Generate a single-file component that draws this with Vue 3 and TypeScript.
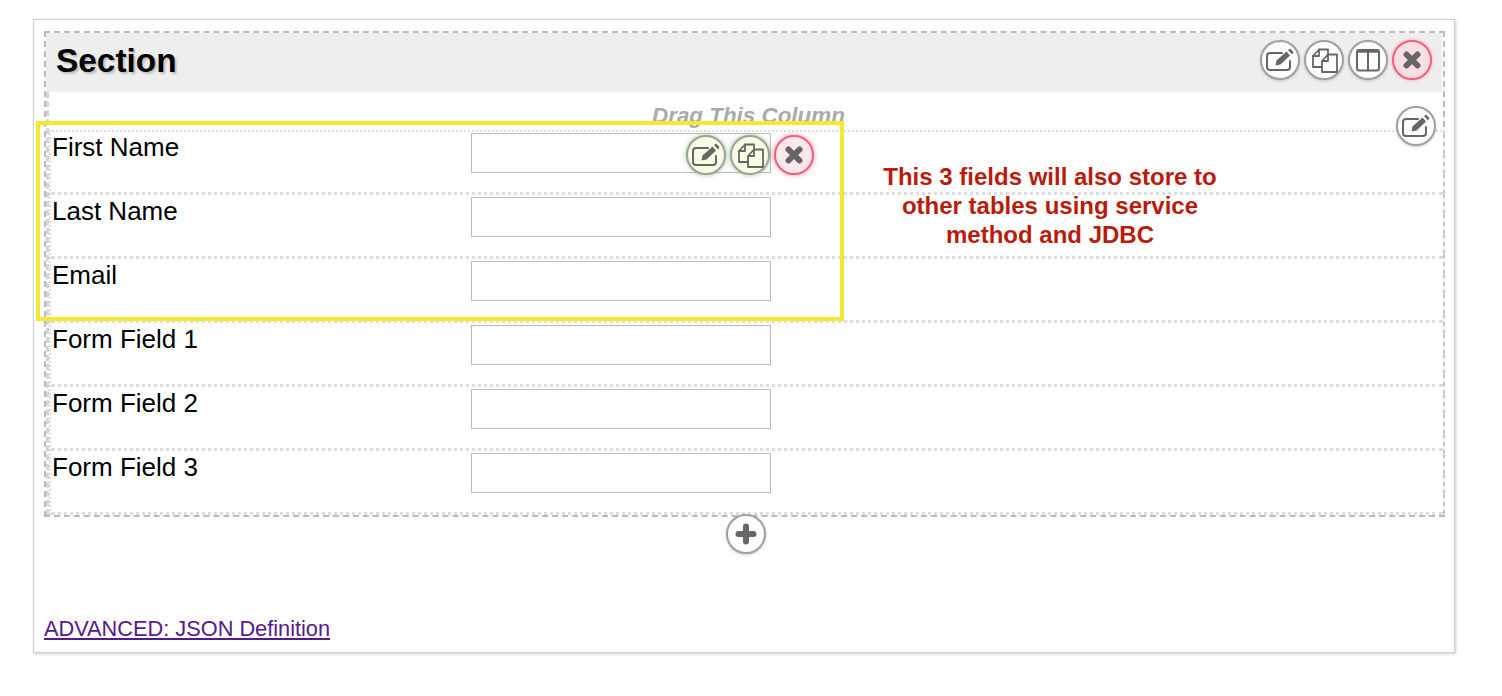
<script setup lang="ts">
const fields: string[] = ['First Name', 'Last Name', 'Email', 'Form Field 1', 'Form Field 2', 'Form Field 3']
</script>

<template>
  <div class="page">
    <div class="card">
      <section class="section">
        <header class="section-head">
          <h1>Section</h1>
          <div class="tools">
            <span class="btn">
              <svg viewBox="0 0 30 30"><path class="ln" d="M17 8H5a3 3 0 0 0-3 3v11a3 3 0 0 0 3 3h17a3 3 0 0 0 3-3v-6" /><path class="fl" d="M10.500 20.500l1-5L21.500 6.500l3.500 4-9.500 9zM23 5l2-1.500 3.500 3.500-1.500 2.500z" /></svg>
            </span>
            <span class="btn">
              <svg viewBox="0 0 30 30"><path class="ln thin" d="M13 22H4V11l6-6.500h9V9.500" /><path class="ln thin" d="M10 4.500V11H4" /><path class="ln thin" d="M13 16l6-6.500h9V27H13zM19 9.500V16h-6" /></svg>
            </span>
            <span class="btn">
              <svg viewBox="0 0 30 30"><rect class="ln" x="4" y="5" width="22" height="20.500" rx="2" /><path class="ln" d="M15 5v20.500" /><path class="ln thick" d="M4 6.200h22" /></svg>
            </span>
            <span class="btn danger">
              <svg viewBox="0 0 30 30"><path class="x" d="M9.500 9.500l11 11M20.500 9.500l-11 11" /></svg>
            </span>
          </div>
        </header>
        <div class="column">
          <div class="drag">Drag This Column</div>
          <span class="btn col-edit">
            <svg viewBox="0 0 30 30"><path class="ln" d="M17 8H5a3 3 0 0 0-3 3v11a3 3 0 0 0 3 3h17a3 3 0 0 0 3-3v-6" /><path class="fl" d="M10.500 20.500l1-5L21.500 6.500l3.500 4-9.500 9zM23 5l2-1.500 3.500 3.500-1.500 2.500z" /></svg>
          </span>
          <div class="rows">
            <div v-for="f in fields" :key="f" class="row">
              <label class="label">{{ f }}</label>
              <input class="input" type="text" />
            </div>
            <div class="field-tools">
              <span class="btn ok">
                <svg viewBox="0 0 30 30"><path class="ln" d="M17 8H5a3 3 0 0 0-3 3v11a3 3 0 0 0 3 3h17a3 3 0 0 0 3-3v-6" /><path class="fl" d="M10.500 20.500l1-5L21.500 6.500l3.500 4-9.500 9zM23 5l2-1.500 3.500 3.500-1.500 2.500z" /></svg>
              </span>
              <span class="btn ok">
                <svg viewBox="0 0 30 30"><path class="ln thin" d="M13 22H4V11l6-6.500h9V9.500" /><path class="ln thin" d="M10 4.500V11H4" /><path class="ln thin" d="M13 16l6-6.500h9V27H13zM19 9.500V16h-6" /></svg>
              </span>
              <span class="btn danger glow">
                <svg viewBox="0 0 30 30"><path class="x" d="M9.500 9.500l11 11M20.500 9.500l-11 11" /></svg>
              </span>
            </div>
          </div>
        </div>
      </section>
      <div class="add">
        <span class="btn plus">
          <svg viewBox="0 0 30 30"><path class="x wide" d="M15 7.500v15M7.500 15h15" /></svg>
        </span>
      </div>
      <a class="json" href="#">ADVANCED: JSON Definition</a>
    </div>
    <div class="highlight"></div>
    <p class="note">This 3 fields will also store to<br />other tables using service<br />method and JDBC</p>
  </div>
</template>

<style scoped>
.page {
  position: relative;
  box-sizing: border-box;
  width: 1502px;
  height: 696px;
  padding: 19px 0 0 33px;
  background: #fff;
  font-family: "Liberation Sans", Arial, sans-serif;
  overflow: hidden;
}
.card {
  box-sizing: border-box;
  width: 1422px;
  height: 634px;
  padding: 11px 8px 10px 10px;
  border: 1px solid #d0d0d0;
  box-shadow: 1px 1px 3px rgba(0, 0, 0, 0.2);
  display: flex;
  flex-direction: column;
}
.section {
  box-sizing: border-box;
  width: 1401px;
  height: 486px;
  border: 2px dashed #bbb;
  flex: none;
}
.section-head {
  box-sizing: border-box;
  height: 59px;
  background: #eee;
  display: flex;
  align-items: center;
  justify-content: space-between;
  padding: 0 10px 5px 10px;
  margin-right: 1px;
}
h1 {
  margin: 2px 0 0;
  font-size: 33.400px;
  font-weight: 700;
  color: #000;
  text-shadow: 2px 2px 2px rgba(0, 0, 0, 0.2);
}
.tools {
  display: flex;
  gap: 4px;
}
.btn {
  box-sizing: border-box;
  width: 40px;
  height: 40px;
  flex: none;
  display: flex;
  align-items: center;
  justify-content: center;
  border: 2px solid #a0a0a0;
  border-radius: 50%;
  background: #fff;
  box-shadow: 0 1px 3px rgba(0, 0, 0, 0.18);
}
.btn svg {
  width: 30px;
  height: 30px;
  flex: none;
}
.ln {
  fill: none;
  stroke: #666;
  stroke-width: 2;
  stroke-linejoin: round;
  stroke-linecap: round;
}
.ln.thin {
  stroke-width: 1.800;
}
.ln.thick {
  stroke-width: 3;
  stroke-linecap: butt;
}
.fl {
  fill: #666;
}
.x {
  fill: none;
  stroke: #666;
  stroke-width: 6;
  stroke-linecap: round;
}
.x.wide {
  stroke-width: 6;
}
.danger {
  border-color: #f4607f;
  background: #f8dfe3;
  box-shadow: 0 0 3px rgba(244, 96, 127, 0.6);
}
.danger.glow {
  background: #fce8ea;
  box-shadow: 0 0 5px rgba(244, 96, 127, 0.7);
}
.ok {
  background: #f6fde2;
  box-shadow: 0 0 5px rgba(110, 180, 100, 0.7);
}
.column {
  position: relative;
  box-sizing: border-box;
  height: 423px;
  border-left: 3px dashed #d4d4d4;
  padding-top: 38px;
}
.drag {
  position: absolute;
  top: 11px;
  left: 603px;
  font-size: 22.400px;
  font-style: italic;
  font-weight: 700;
  line-height: 26px;
  color: #aaa;
  white-space: nowrap;
}
.col-edit {
  position: absolute;
  top: 14px;
  right: 7px;
  z-index: 2;
}
.rows {
  position: relative;
  box-sizing: border-box;
  height: 385px;
  margin-right: -2px;
  border: 2px dotted #ddd;
  border-bottom: 0;
}
.row {
  box-sizing: border-box;
  height: 64px;
  display: flex;
  align-items: flex-start;
  padding: 2px 0 0 1px;
  border-bottom: 3px dotted #ddd;
}
.row:first-child {
  height: 63px;
  padding-top: 1px;
}
.row:last-of-type {
  border-bottom: 0;
}
.label {
  width: 419px;
  flex: none;
  margin-top: -1px;
  font-size: 26px;
  line-height: 30px;
  color: #000;
}
.input {
  box-sizing: border-box;
  width: 300px;
  height: 40px;
  border: 1px solid #bbb;
  background: #fff;
  padding: 0;
  margin: 0;
}
.field-tools {
  position: absolute;
  top: 3px;
  left: 635px;
  display: flex;
  gap: 4px;
}
.add {
  display: flex;
  justify-content: center;
  margin-top: -3px;
  flex: none;
  position: relative;
}
.plus {
  margin-left: 2px;
}
.json {
  margin-top: auto;
  font-size: 21.760px;
  line-height: 26px;
  color: #551a8b;
  text-decoration: underline;
  align-self: flex-start;
}
.highlight {
  position: absolute;
  box-sizing: border-box;
  left: 36px;
  top: 121px;
  width: 808px;
  height: 200px;
  border: 4px solid #f5e92f;
  pointer-events: none;
}
.note {
  position: absolute;
  left: 850px;
  top: 162px;
  width: 400px;
  margin: 0;
  font-size: 24px;
  font-weight: 700;
  line-height: 29px;
  text-align: center;
  color: #b71c0c;
}
</style>
